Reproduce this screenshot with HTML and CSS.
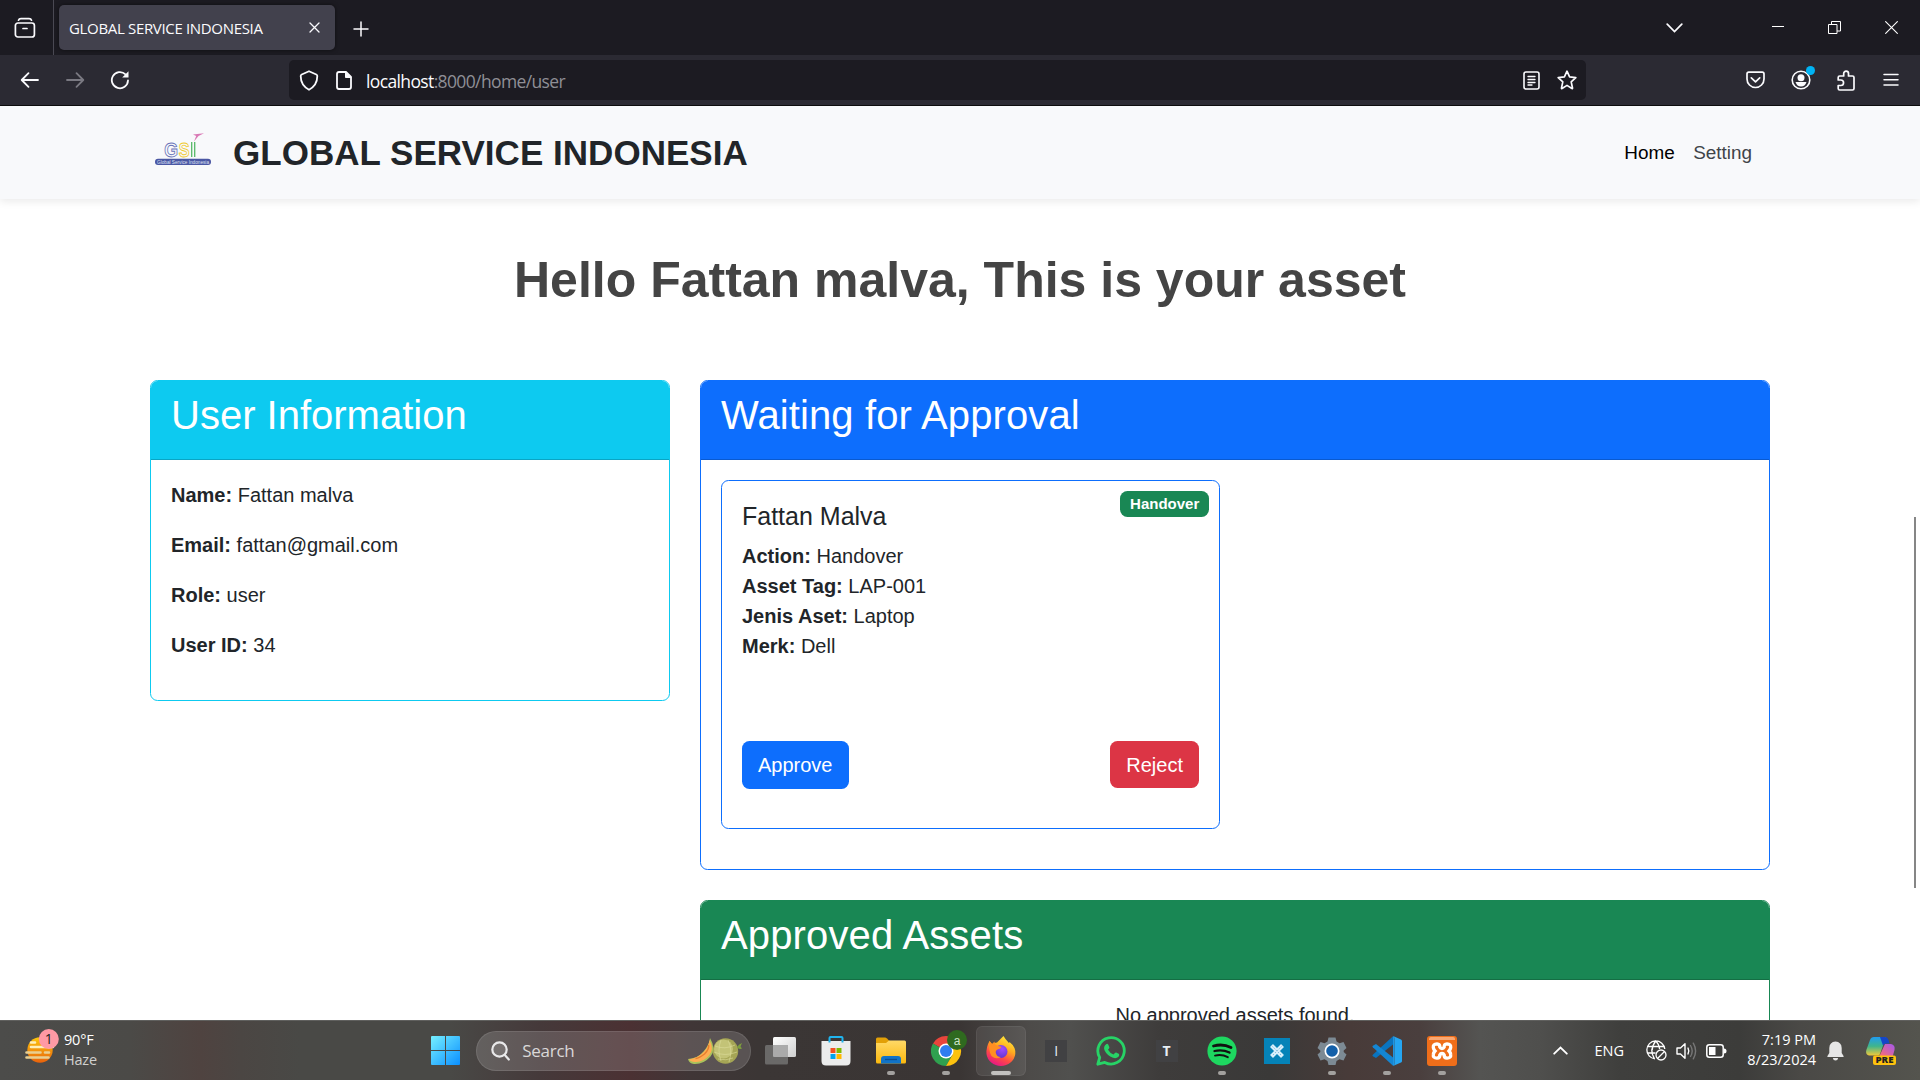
FILE: index.html
```html
<!DOCTYPE html>
<html lang="en">
<head>
<meta charset="utf-8">
<title>GLOBAL SERVICE INDONESIA</title>
<link rel="stylesheet" href="styles.css">
</head>
<body>
<div class="screen">
  <header class="tabbar">
    <div class="tab-overview">
      <svg width="22" height="22" viewBox="0 0 22 22" fill="none" stroke="#fbfbfe" stroke-width="1.7" stroke-linecap="round"><rect x="1.4" y="6" width="19" height="14" rx="2.5"/><path d="M4.5 3.2Q5 1.6 7 1.6h8q2 0 2.500 1.600"/><path d="M9 11.500h4"/></svg>
    </div>
    <div class="tab">
      <span class="tab-title">GLOBAL SERVICE INDONESIA</span>
      <svg width="11" height="11" viewBox="0 0 11 11" stroke="#fbfbfe" stroke-width="1.300" stroke-linecap="round"><path d="M1 1l9 9M10 1l-9 9"/></svg>
    </div>
    <svg class="new-tab" width="16" height="16" viewBox="0 0 16 16" stroke="#fbfbfe" stroke-width="1.500" stroke-linecap="round"><path d="M8 1v14M1 8h14"/></svg>
    <svg class="all-tabs" width="17" height="10" viewBox="0 0 17 10" fill="none" stroke="#fbfbfe" stroke-width="1.700" stroke-linecap="round"><path d="M1.200 1.200l7.300 7.300 7.300-7.300"/></svg>
    <div class="window-buttons">
      <span class="win-btn"><svg width="13" height="13" viewBox="0 0 13 13"><path d="M1 5.500h12" stroke="#fff"/></svg></span>
      <span class="win-btn"><svg width="13" height="13" viewBox="0 0 13 13" fill="none" stroke="#fff"><path d="M.500 3.500h8.500v9H.500zM3.500 3.500v-3h9v9.500H9"/></svg></span>
      <span class="win-btn"><svg width="13" height="13" viewBox="0 0 13 13" stroke="#fff" stroke-width="1.100"><path d="M.300.300l12.400 12.400M12.700.300L.300 12.700"/></svg></span>
    </div>
  </header>

  <div class="toolbar">
    <div class="nav-buttons">
      <span class="tool"><svg width="20" height="20" viewBox="0 0 20 20" fill="none" stroke="#fbfbfe" stroke-width="1.800" stroke-linecap="round" stroke-linejoin="round"><path d="M18 10H2M8.500 3.200L1.700 10l6.800 6.800"/></svg></span>
      <span class="tool"><svg width="20" height="20" viewBox="0 0 20 20" fill="none" stroke="#7a7982" stroke-width="1.800" stroke-linecap="round" stroke-linejoin="round"><path d="M2 10h16M11.500 3.200l6.800 6.800-6.800 6.800"/></svg></span>
      <span class="tool"><svg width="20" height="20" viewBox="0 0 20 20" fill="none" stroke="#fbfbfe" stroke-width="1.800" stroke-linecap="round"><path d="M18 10.500A8.100 8.100 0 1 1 15.500 4.300"/><path d="M18.500 1.200v6.300h-6.300z" fill="#fbfbfe" stroke="none"/></svg></span>
    </div>
    <div class="urlbar">
      <svg width="20" height="21" viewBox="0 0 20 21" fill="none" stroke="#fbfbfe" stroke-width="1.800" stroke-linejoin="round"><path d="M10 1.200l7.300 3.300q1 .500 1 1.600c0 6-2.300 10.500-8.300 13.700C4 16.600 1.700 12.100 1.700 6.100q0-1.100 1-1.600z"/></svg>
      <svg class="page-icon" width="16" height="19" viewBox="0 0 16 19" fill="none" stroke="#fbfbfe" stroke-width="1.800" stroke-linejoin="round"><path d="M3 1h7l5 5v10q0 2-2 2H3q-2 0-2-2V3q0-2 2-2z"/><path d="M9.500 1v5.500H15z" fill="#fbfbfe" stroke-width="1"/></svg>
      <span class="url"><b>localhost</b>:8000/home/user</span>
      <svg class="reader" width="17" height="19" viewBox="0 0 17 19" fill="none" stroke="#fbfbfe" stroke-width="1.600" stroke-linecap="round"><rect x="1" y="1" width="15" height="17" rx="2"/><path d="M5 5.500h7M5 8.500h7M5 11.500h7M5 14h4" stroke-width="1.300"/></svg>
      <svg width="20" height="20" viewBox="0 0 20 20" fill="none" stroke="#fbfbfe" stroke-width="1.700" stroke-linejoin="round"><path d="M10 1.200l2.600 5.700 6.200.700-4.600 4.200 1.300 6.200q.100.700-.600.500L10 15.400l-4.900 3.100q-.700.200-.600-.500l1.300-6.200L1.200 7.600l6.200-.700z"/></svg>
    </div>
    <div class="tools">
      <span class="tool"><svg width="19" height="18" viewBox="0 0 19 18" fill="none" stroke="#fbfbfe" stroke-width="1.700" stroke-linecap="round" stroke-linejoin="round"><path d="M2.800 1.200h13.400q1.800 0 1.800 1.800v5a8.500 8.500 0 0 1-17 0V3q0-1.800 1.800-1.800z"/><path d="M5.300 6.800l4.200 4 4.200-4"/></svg></span>
      <span class="tool account"><svg width="20" height="20" viewBox="0 0 20 20" fill="#fbfbfe"><circle cx="10" cy="10" r="8.800" fill="none" stroke="#fbfbfe" stroke-width="1.600"/><circle cx="10" cy="7.700" r="3.500"/><path d="M4.500 12h11q-1.500 4.500-5.500 4.500T4.500 12z"/></svg><i class="account-dot"></i></span>
      <span class="tool"><svg width="18" height="21" viewBox="0 0 18 21" fill="none" stroke="#fbfbfe" stroke-width="1.700" stroke-linejoin="round"><path d="M1.200 10V7.500Q1.200 6 2.700 6h4V3.500a2.400 2.400 0 0 1 4.800 0V6H15.500Q17 6 17 7.500v11q0 1.500-1.500 1.500H2.700q-1.500 0-1.500-1.500V15.500h2.600a2.700 2.700 0 0 0 0-5.500z"/></svg></span>
      <span class="tool"><svg width="16" height="14" viewBox="0 0 16 14" stroke="#fbfbfe" stroke-width="1.500" stroke-linecap="round"><path d="M1 1.500h14M1 6.700h14M1 12h14"/></svg></span>
    </div>
  </div>

  <main class="page">
    <nav class="navbar">
      <div class="brand">
        <svg class="logo" width="58" height="36" viewBox="0 0 58 36">
          <path d="M39 3.500L50 2.200 44.500 5 40 10.500l2.200-5.600z" fill="#d979b5"/>
          <g fill="#f8f9fb" font-family="Liberation Sans, sans-serif" font-weight="700" font-size="21" stroke-width=".9">
            <text x="10.200" y="25.500" stroke="#6873b8" textLength="13.800" lengthAdjust="spacingAndGlyphs">G</text>
            <text x="24.700" y="25.500" stroke="#efc92f" textLength="10.800" lengthAdjust="spacingAndGlyphs">S</text>
          </g>
          <path d="M37.700 11v15M40.700 11v15" stroke="#56b868" stroke-width="1.300"/>
          <rect x="1" y="27.700" width="56" height="6.300" rx="3" fill="#4a57a3"/>
          <text x="3" y="32.500" font-family="Liberation Sans, sans-serif" font-size="5" fill="#dfe2f3" textLength="52" lengthAdjust="spacingAndGlyphs">Global Service Indonesia</text>
        </svg>
        <span class="brand-name">GLOBAL SERVICE INDONESIA</span>
      </div>
      <div class="nav-links"><a class="nav-link active">Home</a><a class="nav-link">Setting</a></div>
    </nav>

    <h1 class="greeting">Hello Fattan malva, This is your asset</h1>

    <div class="columns">
      <section class="card card-info">
        <h2 class="card-header">User Information</h2>
        <div class="card-body">
          <p><strong>Name:</strong> Fattan malva</p>
          <p><strong>Email:</strong> fattan@gmail.com</p>
          <p><strong>Role:</strong> user</p>
          <p><strong>User ID:</strong> 34</p>
        </div>
      </section>
      <div class="asset-column">
        <section class="card card-primary">
          <h2 class="card-header">Waiting for Approval</h2>
          <div class="card-body">
            <article class="request">
              <span class="badge">Handover</span>
              <h5>Fattan Malva</h5>
              <div class="details">
                <strong>Action:</strong> Handover<br>
                <strong>Asset Tag:</strong> LAP-001<br>
                <strong>Jenis Aset:</strong> Laptop<br>
                <strong>Merk:</strong> Dell
              </div>
              <div class="actions"><button class="btn approve">Approve</button><button class="btn reject">Reject</button></div>
            </article>
          </div>
        </section>
        <section class="card card-success">
          <h2 class="card-header">Approved Assets</h2>
          <div class="card-body empty"><p>No approved assets found.</p></div>
        </section>
      </div>
    </div>
    <i class="scroll-thumb"></i>
  </main>

  <footer class="taskbar">
    <div class="weather">
      <svg width="36" height="36" viewBox="0 0 36 36">
        <defs><linearGradient id="sun" x1="0" y1="0" x2="0" y2="1"><stop offset="0" stop-color="#fdc70c"/><stop offset="1" stop-color="#e8620c"/></linearGradient></defs>
        <circle cx="17" cy="21" r="12.700" fill="url(#sun)"/>
        <g stroke-width="2.600" stroke-linecap="round"><path d="M8 13.500h4M8 18h22" stroke="#fff0b8"/><path d="M3.500 23.500h14M22 23.500h4M3.500 28.500h22" stroke="#e9cf91"/></g>
        <circle cx="25.800" cy="10" r="10" fill="#ff99a4"/>
        <text x="25.800" y="15" font-family="Open Sans, sans-serif" font-size="14" text-anchor="middle" fill="#222">1</text>
      </svg>
      <div class="weather-text"><span>90°F</span><span class="muted">Haze</span></div>
    </div>
    <div class="apps">
      <span class="app start"><svg width="29" height="29" viewBox="0 0 29 29"><defs><linearGradient id="win" x1="0" y1="0" x2="1" y2="1"><stop offset="0" stop-color="#76f0ff"/><stop offset="1" stop-color="#0a8fff"/></linearGradient></defs><path d="M1 0h13v14H0V1q0-1 1-1zM15 0h13q1 0 1 1v13H15zM0 15h14v14H1q-1 0-1-1zM15 15h14v13q0 1-1 1H15z" fill="url(#win)"/></svg></span>
      <div class="search">
        <svg width="19" height="20" viewBox="0 0 19 20" fill="none" stroke="#e9e9ea" stroke-width="2.200" stroke-linecap="round"><circle cx="8.500" cy="8.500" r="7.200" fill="#ffffff22"/><path d="M13.800 14l4 4.500"/></svg>
        <span>Search</span>
        <svg class="melon" width="56" height="28" viewBox="0 0 56 28">
          <circle cx="38.500" cy="14" r="12.700" fill="#a5a555"/><circle cx="36.500" cy="12" r="9.500" fill="#c3c377"/>
          <path d="M28 9q10 4 20-1M27 15q11 5 23 0M31 22q8 2 15-1M34 3q-4 10 0 21M41 3q5 10 1 22" stroke="#dcdb9a" stroke-width=".6" fill="none"/>
          <path d="M50 10q2-3 5-4l-1.500 3.500 1.500 2q-2 1-4.500-.500z" fill="#7d9e3e"/>
          <path d="M23 1q6.500 11 .5 18.500-7 8-16.500 7.500-5-.5-6-5 9.500-.500 15.500-7.500Q22 8.500 23 1z" fill="#a9c25b"/>
          <path d="M22.500 3q5 9.500-.5 15.500-6 7-14 6.500-4.500-.500-6-2.500Q12 20.500 17 14.500q5-5.500 5.500-11.500z" fill="#ffad52"/>
          <path d="M21.500 8q1 4-4 9-5 4-9 4.500" stroke="#e87f2e" fill="none" stroke-width="1.500"/>
        </svg>
      </div>
      <span class="app"><svg width="31" height="28" viewBox="0 0 31 28"><defs><linearGradient id="tv" x1="0" y1="0" x2="1" y2="1"><stop offset="0" stop-color="#fff"/><stop offset="1" stop-color="#cfcfcf"/></linearGradient></defs><rect x="8" y="0" width="23" height="20" rx="1.500" fill="url(#tv)"/><rect x="0" y="8" width="23" height="19.500" rx="1.500" fill="#777" fill-opacity=".78"/><path d="M8 8h15v12H9.500Q8 20 8 18.500z" fill="#aaa"/></svg></span>
      <span class="app"><svg width="30" height="30" viewBox="0 0 30 30"><path d="M8.500 8V2q0-1 1-1h11q1 0 1 1v6" fill="none" stroke="#20b4ee" stroke-width="2"/><path d="M0.500 5h29v20q0 4.500-4.500 4.500H5Q.500 29.500.500 25z" fill="#ececec"/><path d="M9.500 12h5v5h-5z" fill="#f25022"/><path d="M15.500 12h5v5h-5z" fill="#7fba00"/><path d="M9.500 18h5v5h-5z" fill="#00a4ef"/><path d="M15.500 18h5v5h-5z" fill="#ffb900"/><path d="M8.500 5V6.500M21.500 5V6.500" stroke="#20b4ee" stroke-width="2"/></svg></span>
      <span class="app running"><svg width="30" height="27" viewBox="0 0 30 27"><defs><linearGradient id="fold" x1="0" y1="0" x2="0" y2="1"><stop offset="0" stop-color="#ffd967"/><stop offset="1" stop-color="#fbb80d"/></linearGradient></defs><path d="M0 2q0-1.500 1.500-1.500H9q1 0 2 1L13.500 4V8H0z" fill="#e2a007"/><path d="M0 6h10l3-2.500h15.500Q30 3.500 30 5v20q0 1.500-1.500 1.500h-27Q0 26.500 0 25z" fill="url(#fold)"/><path d="M5 26.500V22q0-3 3-3h14q3 0 3 3v4.500z" fill="#1173c7"/><path d="M9 22.500h12" stroke="#0a4f93" stroke-width="1.300"/></svg></span>
      <span class="app running"><svg class="chrome" width="36" height="36" viewBox="0 0 36 36"><path d="M15 21L2 13.500A15 15 0 0 1 28 13.500z" fill="#e8453c"/><path d="M15 21L2 13.500A15 15 0 0 0 15 36L21.500 24.800z" fill="#2fa14f"/><path d="M15 36A15 15 0 0 0 28 13.500H15L21.500 24.800z" fill="#fdc20f"/><circle cx="15" cy="21" r="7.500" fill="#fff"/><circle cx="15" cy="21" r="6" fill="#2f7df0"/><circle cx="26" cy="10" r="10" fill="#2f6a1f"/><text x="26" y="14.500" font-family="Liberation Sans, sans-serif" font-size="12" text-anchor="middle" fill="#cfe3c8">a</text></svg></span>
      <span class="app running current"><svg width="30" height="30" viewBox="0 0 30 30"><defs><linearGradient id="ff" x1=".8" y1="0" x2=".3" y2="1"><stop offset="0" stop-color="#fff13f"/><stop offset=".4" stop-color="#ffab1f"/><stop offset=".7" stop-color="#ff4a45"/><stop offset="1" stop-color="#e5148a"/></linearGradient><radialGradient id="ffc" cx=".6" cy=".3" r=".8"><stop offset="0" stop-color="#a24bff"/><stop offset="1" stop-color="#5a34c9"/></radialGradient></defs><path d="M3.500 5l2.500 3Q8 6.500 11 6.500 14 3.500 17.500 0q2 3.500 5 6.500.5 1 1-.5Q30 11 29.300 18A14.500 13.500 0 0 1 .500 18Q0 11 3.500 5z" fill="url(#ff)"/><circle cx="15" cy="15.500" r="6.500" fill="url(#ffc)"/><path d="M3.500 5l2.500 3 2.500-2.500.5 3 3 1.500 3.500.8q-.5 2-4 2.700-2.500 1.500-1.500 4Q11 21 15 21q-5 3-9.500-1Q2 14 3.500 5z" fill="#ff8f22"/></svg></span>
      <span class="app"><i class="tile tile-i">I</i></span>
      <span class="app"><svg width="30" height="30" viewBox="0 0 30 30"><path d="M1.800 28.200L3.700 21.500A13.200 13.200 0 1 1 8.800 26.400z" fill="none" stroke="#27d366" stroke-width="2.800" stroke-linejoin="round"/><path d="M10.500 8q1.200-.500 1.700.500l1.200 2.800-.2 1-1.200 1.500q2 3.500 5.500 4.700l1.700-1.800 1-.2 2.900 1.500q.5 1.500-.6 2.800-2.500 2.200-5.500 1-6-2.200-8.500-7.500Q7 10.500 10.500 8z" fill="#27d366"/></svg></span>
      <span class="app"><i class="tile">T</i></span>
      <span class="app running"><svg width="30" height="30" viewBox="0 0 30 30"><circle cx="15" cy="15" r="14.600" fill="#1ed760"/><g fill="none" stroke="#111" stroke-linecap="round"><path d="M6.500 10q9.500-2.600 17.500 1.600" stroke-width="2.800"/><path d="M7.500 15q8-2 15 1.600" stroke-width="2.300"/><path d="M8 19.600q7-1.600 12.800 1.600" stroke-width="1.900"/></g></svg></span>
      <span class="app"><svg width="26" height="26" viewBox="0 0 26 26"><path d="M0 0h26v26H0z" fill="#0583b8"/><path d="M7.500 7.500l11 11M18.500 7.500l-11 11" stroke="#d8effb" stroke-width="4.200"/><path d="M7.500 7.500l11 11M18.500 7.500l-11 11" stroke="#82bddb" stroke-width="1" stroke-dasharray="1.500 1.500"/></svg></span>
      <span class="app running"><svg width="30" height="30" viewBox="0 0 30 30"><path d="M11.500 1.500h7l1 4 3 1.700 4-1.200 3 6-2.800 2.500v1.500l2.800 2.500-3 6-4-1.200-3 1.700-1 4h-7l-1-4-3-1.700-4 1.200-3-6L3.300 16v-1.500L.500 12l3-6 4 1.200 3-1.700z" fill="#7c8a94"/><circle cx="15" cy="15" r="7.500" fill="#fff"/><circle cx="15" cy="15" r="5.800" fill="#1360a9"/></svg></span>
      <span class="app running"><svg width="30" height="30" viewBox="0 0 30 30"><path d="M21 .2v8.300L4 22 .8 20.300Q0 19.500.8 18.700z" fill="#0a74bf"/><path d="M21 29.800v-8.300L4 8 .8 9.700Q0 10.500.8 11.300z" fill="#1486d3"/><path d="M21 0l8 3.500Q30 4 30 5v20q0 1-1 1.500L21 30q1.500-1 1.500-2.500v-25Q22.500 1 21 0z" fill="#25a6f2"/><path d="M21 0q1.500 1 1.500 2.500v25Q22.500 29 21 30z" fill="#1d95e3"/></svg></span>
      <span class="app running"><svg width="30" height="30" viewBox="0 0 30 30"><rect width="30" height="30" rx="3" fill="#ef6e1a"/><path d="M2 3q0-2 2-2h22q2 0 2 2v1H2z" fill="#f9a873"/><path d="M10 7.800Q13 8 12.800 11q.7 1.500 2.200 1.500t2.200-1.500Q17 8 20 7.800q4.200.3 3.700 3.700-.2 2-1.700 3.500 1.500 1.500 1.700 3.500.5 3.400-3.700 3.700-3-.2-2.800-3.200-.7-1.500-2.200-1.500T12.800 19q.2 3-2.800 3.200-4.200-.3-3.700-3.700.2-2 1.700-3.500-1.500-1.500-1.700-3.500Q5.800 8.100 10 7.800z" fill="none" stroke="#fff" stroke-width="3.300"/></svg></span>
    </div>
    <div class="tray">
      <svg class="chev" width="15" height="9" viewBox="0 0 15 9" fill="none" stroke="#fff" stroke-width="1.800" stroke-linecap="round"><path d="M1.200 7.700l6.300-6.200 6.300 6.200"/></svg>
      <span class="lang">ENG</span>
      <svg class="globe" width="21" height="21" viewBox="0 0 21 21" fill="none" stroke="#fff" stroke-width="1.300"><path d="M18.800 9A9 9 0 1 0 9 18.900M1.500 6.500h16.500M1.500 13h8M8.500 18.800Q2.500 10 9.800 1q3.500 3.500 3.800 8M9.800 1q-3 3-3.600 9"/><circle cx="15" cy="15" r="5"/><path d="M11.500 18.500l7-7"/></svg>
      <svg class="vol" width="21" height="18" viewBox="0 0 21 18" fill="none" stroke="#fff" stroke-width="1.400" stroke-linejoin="round" stroke-linecap="round"><path d="M1 6h3.500L9 1.800v14.400L4.500 12H1z"/><path d="M12 6q1.600 3 0 6"/><path d="M14.500 3.500q3.400 5.500 0 11M17.300 1.200q4.600 7.800 0 15.600" stroke="#777"/></svg>
      <svg class="batt" width="21" height="14" viewBox="0 0 21 14"><rect x=".8" y=".8" width="16.400" height="12.400" rx="2.500" fill="none" stroke="#fff" stroke-width="1.500"/><path d="M3 3h6.500v8H3z" fill="#fff"/><path d="M18 4.500q2.500 0 2.500 2.500T18 9.500z" fill="#fff"/></svg>
      <div class="clock"><span>7:19 PM</span><span>8/23/2024</span></div>
      <svg class="bell" width="17" height="20" viewBox="0 0 17 20" fill="#e6e6e6"><path d="M8.500.500Q14.500 1 14.700 7v5l2 3.200q.3.800-.7.800H1q-1 0-.7-.8L2.300 12V7Q2.500 1 8.500.500zM5.800 17h5.400q-.5 2.500-2.700 2.500T5.800 17z"/></svg>
      <svg class="copilot" width="30" height="30" viewBox="0 0 30 30"><defs><linearGradient id="cpa" x1="0" y1="0" x2="0" y2="1"><stop offset="0" stop-color="#1f9cf0"/><stop offset=".5" stop-color="#3fb58c"/><stop offset="1" stop-color="#f1c93a"/></linearGradient><linearGradient id="cpb" x1="1" y1="0" x2="0" y2="1"><stop offset="0" stop-color="#a457ee"/><stop offset="1" stop-color="#ff6f6a"/></linearGradient></defs><path d="M8 1h12l-6 17q-.5 1.500-2 1.500H3q-4-1-2.500-6L4 4q1-3 4-3z" fill="url(#cpa)"/><path d="M14 1h5q2.500 0 3.500 3l1 3.500h-3q-2.500 0-3.500 2z" fill="#1546c8"/><path d="M19 8h6q4.500 1 3.500 6l-2 7H13z" fill="url(#cpb)"/><rect x="7" y="19.500" width="23" height="9.500" rx="2" fill="#ffc20e"/><text x="9.500" y="27.200" font-family="Open Sans, sans-serif" font-weight="800" font-size="8.500" textLength="18" lengthAdjust="spacingAndGlyphs" fill="#222">PRE</text></svg>
    </div>
  </footer>
</div>
</body>
</html>
```
FILE: styles.css
```css
* { box-sizing: border-box; }
body { margin: 0; background: #fff; overflow: hidden; }
svg { display: block; flex: none; }
.screen {
  width: 1920px; height: 1080px; display: flex; flex-direction: column; overflow: hidden;
  font-family: "Liberation Sans", Arial, sans-serif; color: #212529;
}

/* browser chrome */
.tabbar { height: 55px; flex: none; display: flex; align-items: center; background: #1c1b22; }
.tab-overview { width: 54px; height: 55px; padding-left: 14px; display: flex; align-items: center; border-right: 1px solid #4a4953; }
.tab {
  width: 276px; height: 45px; margin-left: 5px; padding: 0 15px 0 10px;
  display: flex; align-items: center; justify-content: space-between;
  background: #42414d; border-radius: 5px; box-shadow: 0 0 4px #0008;
}
.tab-title { padding-top: 1px; font: 15px "Open Sans", sans-serif; letter-spacing: -.330px; color: #fbfbfe; white-space: nowrap; }
.new-tab { margin: 2px 0 0 18px; }
.all-tabs { margin-left: auto; margin-right: 66px; }
.window-buttons { display: flex; }
.win-btn { width: 57px; display: flex; justify-content: center; }

.toolbar { height: 51px; flex: none; display: flex; align-items: center; background: #2b2a33; border-bottom: 1px solid #0c0c0d; padding: 0 7px; }
.nav-buttons, .tools { display: flex; }
.tool { width: 45px; display: flex; align-items: center; justify-content: center; }
.tools { margin-left: auto; }
.urlbar {
  width: 1297px; height: 40px; margin-left: 147px; padding: 0 9px 0 10px;
  display: flex; align-items: center; background: #1c1b22; border-radius: 5px;
}
.page-icon { margin-left: 17px; }
.url { margin-left: 14px; padding-top: 2px; font: 17.500px "Open Sans", sans-serif; letter-spacing: -.630px; color: #8f8f96; }
.url b { font-weight: 400; color: #fbfbfe; }
.reader { margin: 0 17px 0 auto; }
.account { position: relative; }
.account-dot { position: absolute; right: 8px; top: -4px; width: 9px; height: 9px; border-radius: 50%; background: #00b3f4; }

/* web page */
.page { position: relative; flex: 1; min-height: 0; overflow: hidden; background: #fff; }
.navbar {
  height: 93px; padding: 0 168px 0 154px; display: flex; align-items: center; justify-content: space-between;
  background: #f8f9fb; box-shadow: 0 3px 8px rgba(0, 0, 0, .08);
}
.brand { display: flex; align-items: center; gap: 21px; }
.logo { margin-top: -8px; }
.brand-name { font-size: 35px; font-weight: 700; line-height: 42px; letter-spacing: .030px; }
.nav-links { display: flex; gap: 18.500px; font-size: 18.900px; }
.nav-link { color: #404449; }
.nav-link.active { color: #000; }
.greeting { margin: 51px 0 0; text-align: center; font-size: 50px; line-height: 60px; font-weight: 700; color: #444; }
.columns { display: flex; gap: 30px; align-items: flex-start; padding: 70px 150px 0; }
.card { border: 1px solid; border-radius: 7.500px; overflow: hidden; background: #fff; }
.card-header {
  margin: 0; height: 79px; padding: 10px 20px; color: #fff;
  font-size: 40px; line-height: 48px; font-weight: 400; border-bottom: 1px solid rgba(0, 0, 0, .18);
}
.card-body { padding: 20px; font-size: 20px; line-height: 30px; }
.card-body p { margin: 0 0 20px; }
.card-info { width: 520px; height: 321px; border-color: #0dcaf0; }
.card-info .card-header { background: #0dcaf0; }
.asset-column { width: 1070px; display: flex; flex-direction: column; gap: 30px; }
.card-primary { height: 490px; border-color: #0d6efd; }
.card-primary .card-header { background: #0d6efd; letter-spacing: .120px; }
.card-success { height: 230px; border-color: #198754; }
.card-success .card-header { background: #198754; letter-spacing: .140px; }
.empty { text-align: center; }
.request { position: relative; width: 499px; height: 349px; padding: 20px; border: 1px solid #0d6efd; border-radius: 7.500px; }
.request h5 { margin: 0 0 10px; font-size: 25px; line-height: 30px; font-weight: 400; }
.badge {
  position: absolute; top: 10px; right: 10px; padding: 5.250px 9.750px; border-radius: 7.500px;
  background: #198754; color: #fff; font-size: 15px; line-height: 15px; font-weight: 700;
}
.actions { display: flex; justify-content: space-between; align-items: flex-start; margin-top: 80px; }
.btn { height: 47px; padding: 0 16px; border: 0; border-radius: 7.500px; color: #fff; font: 20px "Liberation Sans", Arial, sans-serif; }
.approve { height: 48px; background: #0d6efd; }
.reject { padding-top: 2px; background: #dc3545; }
.scroll-thumb { position: absolute; left: 1914px; top: 411px; width: 2px; height: 371px; background: #868686; }

/* desktop taskbar */
.taskbar {
  height: 60px; flex: none; display: flex; align-items: center; border-top: 1px solid #60605e; color: #fff;
  font-family: "Open Sans", "Noto Sans", sans-serif;
  background: linear-gradient(90deg, #4c4c4a 0, #4b4a47 130px, #4f4340 200px, #4b4643 240px, #494946 300px, #494946 450px, #45393a 540px, #4b3133 630px, #403637 690px, #3b3635 760px, #3a3534 960px, #4d4b49 1030px, #50504e 1070px, #3e3c3b 1160px, #3a3938 1270px, #483b39 1350px, #4a3f3e 1420px, #545452 1480px, #4f4f4d 1540px, #3f3f3d 1620px, #3c3c3a 1740px, #4a4946 1800px, #54544e 1920px);
}
.weather { width: 418px; padding-left: 23px; display: flex; align-items: center; gap: 5px; }
.weather svg { margin-top: -7px; }
.weather-text { display: flex; flex-direction: column; margin-top: -2px; font-size: 14.500px; line-height: 20px; letter-spacing: -.200px; }
.muted { color: #d0d0ce; }
.apps { display: flex; align-items: center; }
.app { position: relative; width: 55.130px; height: 50px; display: flex; align-items: center; justify-content: center; }
.running::after { content: ""; position: absolute; left: 50%; bottom: 1px; width: 8px; height: 4px; margin-left: -4px; border-radius: 2px; background: #a3a19f; }
.current { width: 50px; margin: 0 2.570px; border-radius: 6px; background: rgba(255, 255, 255, .08); box-shadow: inset 0 0 0 1px rgba(255, 255, 255, .06); }
.current::after { width: 20px; margin-left: -10px; background: #c2c1bf; }
.search {
  width: 275px; height: 40px; margin: 0 2px 0 3px; padding: 0 8px 0 15px; display: flex; align-items: center; border-radius: 20px;
  background: rgba(255, 255, 255, .15); box-shadow: inset 0 0 0 1px rgba(255, 255, 255, .1); font-size: 17px; color: #dad8d8;
}
.search span { margin-left: 12px; letter-spacing: -.250px; }
.melon { margin-left: auto; }
.chrome { margin: -5px 0 0 6px; }
.tile { width: 22px; height: 22px; background: #414143; font: 700 14px/22px "Open Sans", sans-serif; text-align: center; color: #e6eef5; }
.tile-i { font-weight: 400; }
.tray { margin-left: auto; display: flex; align-items: center; padding-right: 24px; font-size: 14.500px; }
.lang { margin: -1px 0 0 26px; }
.globe { margin-left: 22px; }
.vol { margin-left: 9px; }
.batt { margin-left: 9px; }
.clock { width: 89px; display: flex; flex-direction: column; margin-top: -1px; text-align: right; line-height: 20px; }
.bell { margin-left: 11px; }
.copilot { margin-left: 22px; }
```
